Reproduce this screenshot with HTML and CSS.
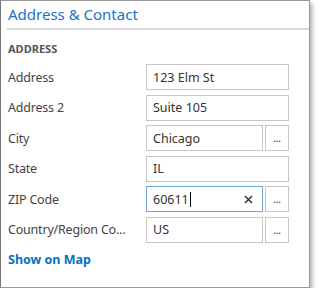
FILE: index.html
```html
<!DOCTYPE html>
<html lang="en">
<head>
    <meta charset="UTF-8">
    <title>Address &amp; Contact</title>
    <link rel="stylesheet" href="styles.css">
</head>
<body>
  <div class="panel">
    <div class="header">
      <h2 class="title">Address &amp; Contact</h2>
    </div>
    <div class="body">
      <h3 class="section">ADDRESS</h3>

      <div class="row">
        <span class="label">Address</span>
        <div class="field"><span class="box">123 Elm St</span></div>
      </div>
      <div class="row">
        <span class="label">Address 2</span>
        <div class="field"><span class="box">Suite 105</span></div>
      </div>
      <div class="row">
        <span class="label">City</span>
        <div class="field">
          <span class="box">Chicago</span>
          <span class="more">...</span>
        </div>
      </div>
      <div class="row">
        <span class="label">State</span>
        <div class="field"><span class="box">IL</span></div>
      </div>
      <div class="row">
        <span class="label">ZIP Code</span>
        <div class="field">
          <span class="box focused">60611<i class="caret"></i>
            <svg class="clear" width="9" height="9" viewBox="0 0 9 9">
              <path d="M1 1 L8 8 M8 1 L1 8" stroke="#333" stroke-width="1.5" fill="none"/>
            </svg>
          </span>
          <span class="more">...</span>
        </div>
      </div>
      <div class="row">
        <span class="label" title="Country/Region Code">Country/Region Co...</span>
        <div class="field">
          <span class="box">US</span>
          <span class="more">...</span>
        </div>
      </div>

      <a class="map-link" href="#">Show on Map</a>
    </div>
  </div>
</body>
</html>
```

FILE: styles.css
```css
body {
    margin: 0;
    background: #ffffff;
    font-family: "Noto Sans", "Open Sans", sans-serif;
    color: #444;
}

.panel {
    box-sizing: border-box;
    width: 310px;
    height: 288px;
    border: 1px solid #9a9a9a;
    border-left-color: #777;
    background: #fff;
    box-shadow: 2px 3px 5px rgba(0, 0, 0, 0.35);
}

.header {
    margin-left: 6px;
    padding-left: 1px;
    height: 27px;
    border-bottom: 2px solid #d9d9d9;
}

.title {
    margin: 0;
    font-size: 15px;
    font-weight: normal;
    line-height: 26px;
    color: #1a73c9;
}

.body {
    padding-left: 7px;
}

.section {
    margin: 0;
    padding-top: 12px;
    margin-bottom: 8px;
    font-size: 11px;
    line-height: 14px;
    font-weight: bold;
    color: #555;
}

.row {
    display: flex;
    align-items: center;
    height: 26px;
    margin-bottom: 4.6px;
}

.label {
    width: 132px;
    margin-right: 6px;
    font-size: 12.5px;
    white-space: nowrap;
    letter-spacing: -0.2px;
    color: #444;
}

.field {
    display: flex;
    gap: 2px;
    width: 143px;
    height: 26px;
}

.box {
    position: relative;
    flex: 1;
    box-sizing: border-box;
    display: flex;
    align-items: center;
    padding-left: 6px;
    border: 1px solid #c6c6c6;
    font-size: 12.5px;
    color: #333;
}

.box.focused {
    border-color: #6ea6dc;
}

.caret {
    display: inline-block;
    width: 1px;
    height: 15px;
    margin-left: 1px;
    background: #000;
}

.clear {
    position: absolute;
    right: 9px;
    top: 8px;
}

.more {
    box-sizing: border-box;
    width: 24px;
    border: 1px solid #c6c6c6;
    text-align: center;
    font-size: 9px;
    line-height: 26px;
    font-weight: bold;
    color: #555;
}

.map-link {
    display: block;
    margin-top: 8px;
    font-size: 12.5px;
    font-weight: bold;
    color: #0a6fc2;
    text-decoration: none;
}
```
